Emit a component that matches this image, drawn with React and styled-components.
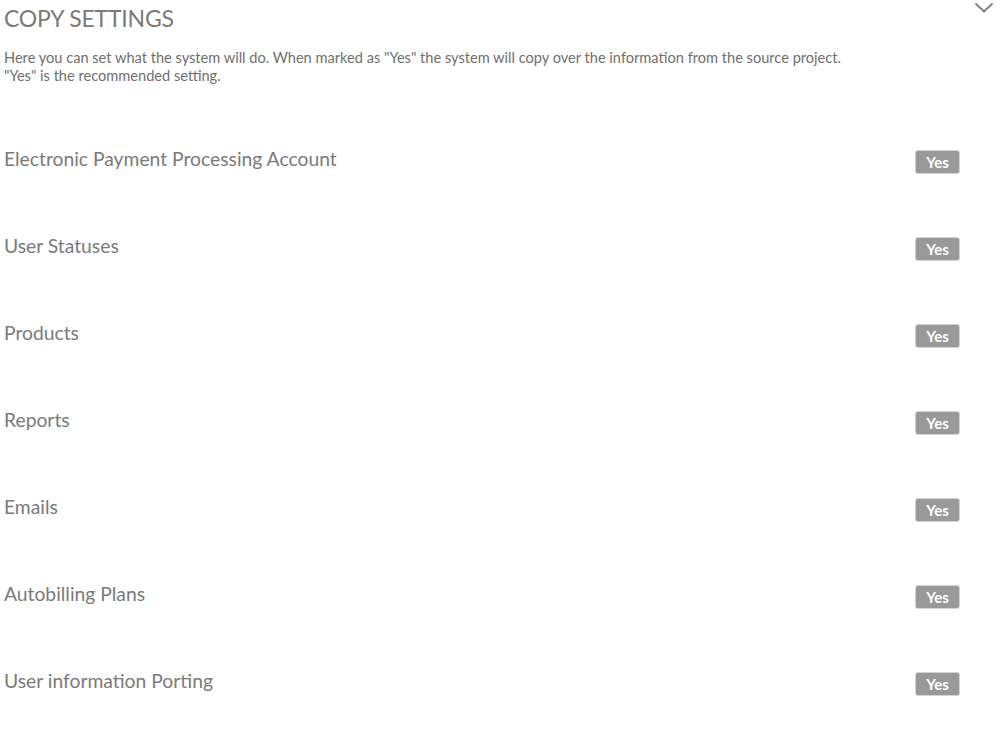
import styled, { createGlobalStyle } from 'styled-components';

const GlobalStyle = createGlobalStyle`
  html, body {
    margin: 0;
    padding: 0;
    background: #fff;
  }
  body {
    font-family: Lato, "Liberation Sans", sans-serif;
    color: #7a7a7a;
  }
`;

const items = [
  'Electronic Payment Processing Account',
  'User Statuses',
  'Products',
  'Reports',
  'Emails',
  'Autobilling Plans',
  'User information Porting',
];

function App() {
  return (
    <Container>
      <GlobalStyle />
      <Header>
        <Title>COPY SETTINGS</Title>
        <Toggle aria-label="collapse">
          <svg width="20" height="12" viewBox="0 0 20 12">
            <path d="M1.5 1.5 L10 9.5 L18.5 1.5" fill="none" stroke="#808080" strokeWidth="2" />
          </svg>
        </Toggle>
      </Header>
      <Description>
        Here you can set what the system will do. When marked as "Yes" the system will copy over the information from the source project.
        <br />
        "Yes" is the recommended setting.
      </Description>
      <List>
        {items.map((label) => (
          <Row key={label}>
            <Label>{label}</Label>
            <YesButton>Yes</YesButton>
          </Row>
        ))}
      </List>
    </Container>
  );
}

export default App;

const Container = styled.div`
  width: 1003px;
  padding: 0 0 0 4px;
  box-sizing: border-box;
`;

const Header = styled.div`
  display: flex;
  justify-content: space-between;
  align-items: flex-start;
  height: 38px;
`;

const Title = styled.h1`
  margin: 0;
  padding-top: 4px;
  font-size: 23px;
  font-weight: 400;
  line-height: 28px;
  color: #7a7a7a;
  letter-spacing: -0.2px;
`;

const Toggle = styled.button`
  background: none;
  border: none;
  padding: 0;
  margin: 2px 9px 0 0;
  cursor: pointer;
  line-height: 0;
`;

const Description = styled.p`
  margin: 11px 0 0;
  font-size: 14.6px;
  line-height: 18px;
  color: #6f6f6f;
`;

const List = styled.div`
  display: flex;
  flex-direction: column;
  margin-top: 30px;
`;

const Row = styled.div`
  display: flex;
  justify-content: space-between;
  align-items: center;
  height: 87px;
  padding-right: 43px;
`;

const Label = styled.span`
  font-size: 19.3px;
  color: #7a7a7a;
`;

const YesButton = styled.button`
  width: 45px;
  height: 24px;
  margin-top: 7px;
  padding: 0;
  background: #999;
  color: #fff;
  font-family: Lato, "Liberation Sans", sans-serif;
  font-weight: 700;
  font-size: 15px;
  border: 1px solid #d4d4d4;
  border-radius: 3px;
  cursor: pointer;
`;
